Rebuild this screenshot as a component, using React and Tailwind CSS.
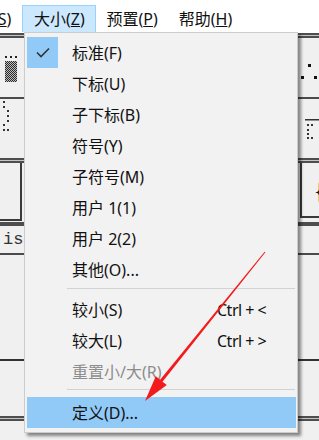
const font = { fontFamily: '"Noto Sans", "Noto Sans CJK SC", sans-serif' };

const CheckMark = () => (
  <svg width="14" height="11" viewBox="0 0 14 11" fill="none" stroke="#333" strokeWidth="1.6">
    <path d="M1 5.5 L5 9.5 L13 1.5" />
  </svg>
);

const groupA = [
  { label: '标准(F)', checked: true },
  { label: '下标(U)' },
  { label: '子下标(B)' },
  { label: '符号(Y)' },
  { label: '子符号(M)' },
  { label: '用户 1(1)' },
  { label: '用户 2(2)' },
  { label: '其他(O)...' },
];

const groupB = [
  { label: '较小(S)', shortcut: 'Ctrl + <' },
  { label: '较大(L)', shortcut: 'Ctrl + >' },
  { label: '重置小/大(R)', disabled: true },
];

function MenuItem({ label, shortcut, checked, disabled, active }) {
  return (
    <div className={`h-[31px] flex items-center ${active ? 'bg-[#91c9f7]' : ''}`}>
      <div className="w-[45px] h-full flex">
        {checked && (
          <div className="w-[31px] h-[31px] bg-[#91c9f7] flex items-center justify-center">
            <CheckMark />
          </div>
        )}
      </div>
      <span className={`w-[145px] text-[16px] leading-none ${disabled ? 'text-[#8d8d8d]' : 'text-[#111]'}`}>{label}</span>
      {shortcut && <span className="text-[16px] leading-none text-[#111] tracking-[-0.5px]">{shortcut}</span>}
    </div>
  );
}

const DoubleLine = ({ h = 'h-[5px]' }) => (
  <div className={`${h} border-y-2 border-[#4e4e4e] bg-[#c4c4c4]`} />
);

export default function App() {
  return (
    <div className="w-[319px] h-[440px] relative overflow-hidden bg-white flex flex-col" style={font}>
      {/* menu bar */}
      <div className="h-[32px] pt-[5px] flex text-[16px] text-[#111] bg-white shrink-0">
        <div className="h-[27px] flex items-center ml-[-23px] pr-[11px]">
          <span>式(<u>S</u>)</span>
        </div>
        <div className="h-[27px] w-[74px] flex items-center justify-center bg-[#cce8ff] border border-[#99d1ff] border-b-0">
          <span>大小(<u>Z</u>)</span>
        </div>
        <div className="h-[27px] flex items-center px-[10px]">
          <span>预置(<u>P</u>)</span>
        </div>
        <div className="h-[27px] flex items-center px-[10px] ml-[1px]">
          <span>帮助(<u>H</u>)</span>
        </div>
      </div>

      {/* window body behind the menu */}
      <div className="flex-1 flex flex-col bg-[#f0f0f0]">
        <div className="h-[1px] bg-white" />
        <DoubleLine />
        <div className="h-[59px] flex justify-between">
          <svg width="24" height="59">
            <defs>
              <pattern id="dith" width="2" height="2" patternUnits="userSpaceOnUse">
                <rect width="2" height="2" fill="#bdbdbd" />
                <rect width="1" height="1" fill="#2a2a2a" />
                <rect x="1" y="1" width="1" height="1" fill="#2a2a2a" />
              </pattern>
            </defs>
            <rect x="5" y="18" width="2" height="2" fill="#222" />
            <rect x="10" y="18" width="2" height="2" fill="#222" />
            <rect x="15" y="18" width="2" height="2" fill="#222" />
            <rect x="5" y="23" width="12" height="21" fill="url(#dith)" />
          </svg>
          <svg width="21" height="59">
            <rect x="10" y="26" width="3" height="3" fill="#111" />
            <rect x="3" y="38" width="3" height="3" fill="#111" />
            <rect x="16" y="38" width="3" height="3" fill="#111" />
          </svg>
        </div>
        <div className="h-[2px] bg-[#4a4a4a]" />
        <div className="h-[59px] flex justify-between">
          <svg width="24" height="59">
            <rect x="3" y="2" width="2" height="2" fill="#333" />
            <rect x="3" y="7" width="2" height="2" fill="#333" />
            <rect x="7" y="11" width="2" height="2" fill="#333" />
            <rect x="7" y="16" width="2" height="2" fill="#333" />
            <rect x="7" y="21" width="2" height="2" fill="#333" />
            <rect x="3" y="25" width="2" height="2" fill="#333" />
            <rect x="3" y="30" width="2" height="2" fill="#333" />
            <rect x="7" y="30" width="2" height="2" fill="#333" />
          </svg>
          <svg width="21" height="59">
            <rect x="7" y="20" width="14" height="1.5" fill="#333" />
            <rect x="9" y="25" width="2" height="2" fill="#333" />
            <rect x="13" y="25" width="2" height="2" fill="#333" />
            <rect x="9" y="30" width="2" height="2" fill="#333" />
            <rect x="9" y="34" width="2" height="2" fill="#333" />
            <rect x="9" y="38" width="2" height="2" fill="#333" />
            <rect x="13" y="38" width="2" height="2" fill="#333" />
          </svg>
        </div>
        <DoubleLine />
        <div className="h-[59px] flex justify-between">
          <div className="w-[22px] h-[58px] border-r-2 border-b-2 border-[#3a3a3a]" />
          <div className="w-[21px] pl-[2px]">
            <div className="h-[55px] border-l-2 border-b-2 border-[#3a3a3a] flex items-center pl-[11px] text-[30px] leading-none text-[#111]" style={{ fontFamily: '"Liberation Serif", serif' }}>
              {'{'}
            </div>
          </div>
        </div>
        <DoubleLine h="h-[4px]" />
        <div className="h-[27px] flex items-center">
          <span className="ml-[3px] text-[17px] leading-none text-[#333]" style={{ fontFamily: '"Liberation Mono", monospace' }}>is</span>
        </div>
        <div className="h-[2px] bg-[#4a4a4a]" />
        <div className="h-[104px]" />
        <div className="h-[2px] bg-[#333]" />
        <div className="h-[55px]" />
        <DoubleLine />
        <div className="flex-1" />
      </div>

      {/* dropdown menu */}
      <div className="absolute left-[24px] top-[32px] w-[274px] h-[401px] bg-[#f2f2f2] border border-[#cccccc] shadow-[3px_3px_3px_rgba(0,0,0,0.45)] pt-[4px] pl-[2px] pr-[1px] flex flex-col">
        {groupA.map((it) => (
          <MenuItem key={it.label} {...it} />
        ))}
        <div className="pt-[3px] pb-[5px] pl-[40px] pr-[1px]">
          <div className="h-[1px] bg-[#d2d2d2]" />
        </div>
        {groupB.map((it) => (
          <MenuItem key={it.label} {...it} />
        ))}
        <div className="pt-[2px] pb-[7px] pl-[40px] pr-[1px]">
          <div className="h-[1px] bg-[#d2d2d2]" />
        </div>
        <MenuItem label="定义(D)..." active />
      </div>

      {/* red annotation arrow */}
      <svg className="absolute left-0 top-0 pointer-events-none" width="319" height="440">
        <polygon
          points="264.6,251.7 265.4,252.3 162.5,381.7 166.8,385.1 145,401 155.8,376.3 160.1,379.7"
          fill="#f31b1b"
        />
      </svg>
    </div>
  );
}
